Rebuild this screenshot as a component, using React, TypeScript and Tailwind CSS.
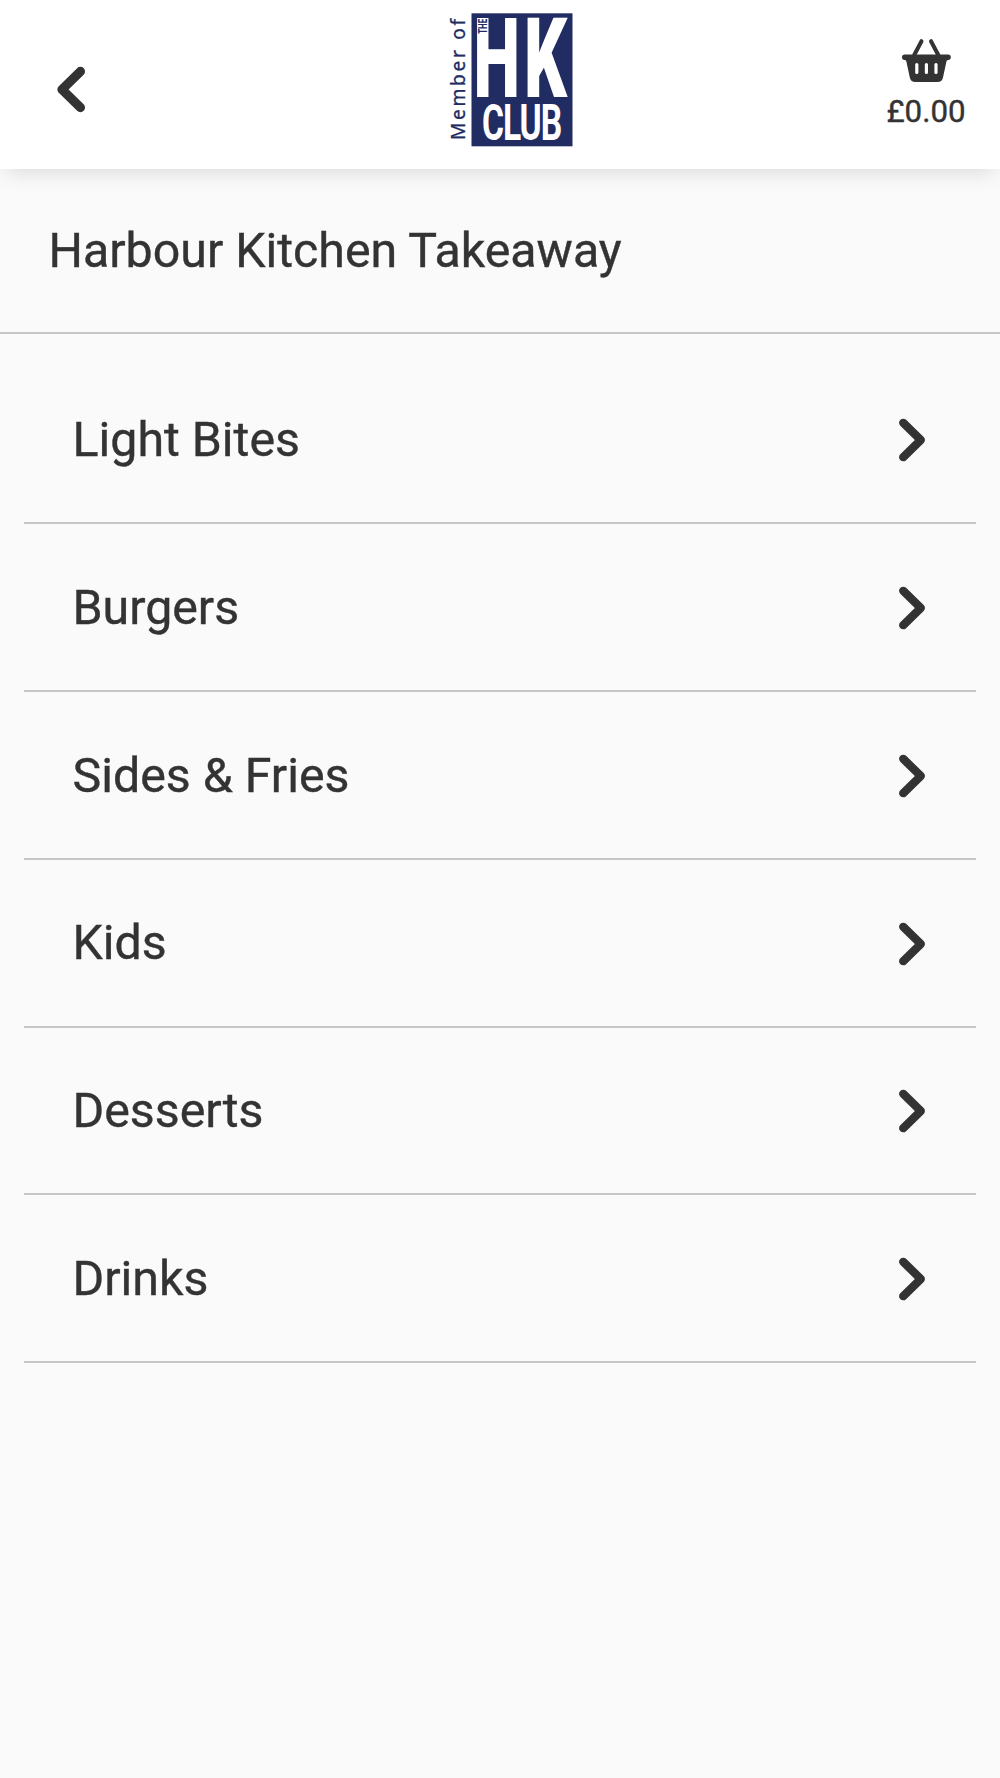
const categories = ['Light Bites', 'Burgers', 'Sides & Fries', 'Kids', 'Desserts', 'Drinks'];

function ClubLogo() {
  return (
    <svg width="130" height="140" viewBox="446 10 130 140" className="block overflow-visible" fontFamily="Roboto, sans-serif">
      <rect x="471.5" y="13.3" width="101" height="133" fill="#212d62" />
      <text transform="translate(465 140) rotate(-90)" fontFamily="'Noto Sans', sans-serif" fontSize="19.2" fill="#212d62" stroke="#212d62" strokeWidth="0.3" textLength="121" lengthAdjust="spacing">
        Member of
      </text>
      <g fill="#fff" fontWeight="900">
        <text transform="translate(473.4 97) scale(.59 1)" fontSize="112">H</text>
        <text transform="translate(523.9 97) scale(.6 1)" fontSize="112">K</text>
        <text transform="translate(482 140.3) scale(.68 1)" fontSize="49.5" fontWeight="700" textLength="118" lengthAdjust="spacing">CLUB</text>
        <text transform="translate(487.2 33.8) rotate(-90) scale(.6 1)" fontSize="13.2" fontWeight="700" fill="#212d62">THE</text>
      </g>
    </svg>
  );
}

function Basket() {
  return (
    <svg width="52" height="46" viewBox="900 37 52 46" className="block">
      <path d="M914.2 55 921.5 41.200M938.300 55 931 41.200" stroke="#333" strokeWidth="4" strokeLinecap="round" />
      <path d="M904.700 54.500h43.400a2.400 2.400 0 0 1 0 5.400l-1.500.8-3.600 16.800q-1 4.500-5.500 4.500h-22.200q-4.500 0-5.500-4.500l-3.600-16.800-1.500-.8a2.400 2.400 0 0 1 0-5.400z" fill="#333" />
      <path d="M916.800 64.500v8M926.400 64.500v8M936 64.500v8" stroke="#fff" strokeWidth="3.200" strokeLinecap="round" />
    </svg>
  );
}

function ChevronRight() {
  return (
    <svg width="28" height="44" viewBox="0 0 28 44" fill="none" className="block">
      <path d="M5.200 4.800 22.800 22 5.200 39.200" stroke="#333" strokeWidth="8.300" strokeLinecap="round" strokeLinejoin="round" />
    </svg>
  );
}

export default function App() {
  return (
    <div className="min-h-[1778px] bg-[#fafafa] font-['Roboto',sans-serif] text-[#333] [-webkit-text-stroke:0.4px_#333]">
      <header className="relative grid h-[169px] grid-cols-3 bg-white shadow-[0_10px_20px_-6px_rgba(0,0,0,0.12)]">
        <button aria-label="Back" className="mt-[65px] ml-[55px] h-12 w-8">
          <svg width="32" height="48" viewBox="55 65 32 48" fill="none" className="block">
            <path d="M80.400 71.500 62 89.500l18.400 18" stroke="#333" strokeWidth="9.300" strokeLinecap="round" strokeLinejoin="round" />
          </svg>
        </button>
        <div className="mt-[10px] ml-[113px] [-webkit-text-stroke:0]">
          <ClubLogo />
        </div>
        <button className="mt-[37px] mr-[34px] flex w-[80px] flex-col items-center justify-self-end">
          <Basket />
          <span className="mt-[9px] text-[31.300px] leading-[40px]">£0.00</span>
        </button>
      </header>
      <h1 className="h-[165px] border-b-2 border-[#c6c6c6] pl-[48.500px] text-[48.300px] leading-[164px]">Harbour Kitchen Takeaway</h1>
      <ul className="mx-6 mt-[22.400px]">
        {categories.map((name) => (
          <li key={name} className="flex h-[167.800px] items-center justify-between border-b-2 border-[#c6c6c6] pt-[2px] pr-[50.500px] pl-[48.500px] text-[48.300px]">
            <span>{name}</span>
            <ChevronRight />
          </li>
        ))}
      </ul>
    </div>
  );
}
